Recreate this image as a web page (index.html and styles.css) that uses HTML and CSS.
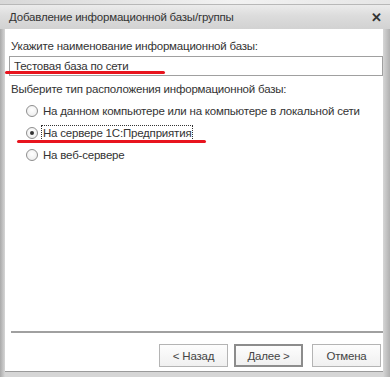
FILE: index.html
```html
<!DOCTYPE html>
<html lang="ru">
<head>
  <meta charset="UTF-8">
  <title>Добавление информационной базы/группы</title>
  <link rel="stylesheet" href="styles.css">
</head>
<body>
  <div class="behind"></div>
  <div class="window">
    <div class="titlebar">
      <span class="title">Добавление информационной базы/группы</span>
      <span class="close">&#x2715;</span>
    </div>
    <div class="content">
      <div class="label">Укажите наименование информационной базы:</div>
      <div class="field">
        <input type="text" class="name" value="Тестовая база по сети">
        <div class="mark mark-name"></div>
      </div>
      <div class="label second">Выберите тип расположения информационной базы:</div>
      <div class="options">
        <label class="option"><span class="radio"></span><span class="text">На данном компьютере или на компьютере в локальной сети</span></label>
        <label class="option checked"><span class="radio"></span><span class="text focus">На сервере 1С:Предприятия</span><div class="mark mark-server"></div></label>
        <label class="option"><span class="radio"></span><span class="text">На веб-сервере</span></label>
      </div>
      <div class="spacer"></div>
      <div class="footer">
        <button class="btn">&lt; Назад</button>
        <button class="btn default">Далее &gt;</button>
        <button class="btn cancel">Отмена</button>
      </div>
    </div>
  </div>
</body>
</html>
```

FILE: styles.css
```css
body {
  margin: 0;
  height: 377px;
  overflow: hidden;
  background-color: #c9c9c9;
  font-family: "Liberation Sans", Arial, sans-serif;
  font-size: 11.5px;
  letter-spacing: -0.2px;
  color: #333;
}
.behind {
  height: 4px;
  background: linear-gradient(to right, #d8d8d8, #f2f2f2 60%, #e6e6e6);
}
.window {
  height: 373px;
  display: flex;
  flex-direction: column;
  background: linear-gradient(to right, #a9a9a9, #d6d6d6 5px, #d6d6d6 calc(100% - 7px), #b0b0b0);
}
.titlebar {
  height: 24px;
  display: flex;
  align-items: center;
  justify-content: space-between;
  padding: 0 8px 0 9px;
  background: linear-gradient(#ececec, #dcdcdc 45%, #d2d2d2);
  border-top: 1px solid #b8b8b8;
}
.title {
  color: #333;
}
.close {
  font-size: 13px;
  font-weight: bold;
  color: #333;
}
.content {
  flex: 1;
  margin: 0 7px 6px 5px;
  background-color: #fff;
  display: flex;
  flex-direction: column;
  padding: 9px 0 0 4px;
  box-shadow: 0 1px 0 #9a9a9a;
}
.label {
  padding-left: 2px;
  height: 16px;
  line-height: 16px;
}
.label.second {
  margin-top: 5px;
}
.field {
  position: relative;
  margin-top: 2px;
}
.name {
  display: block;
  box-sizing: border-box;
  width: 374px;
  height: 20px;
  border: 1px solid #a0a0a0;
  padding: 0 4px;
  font-family: "Liberation Sans", Arial, sans-serif;
  font-size: 11.5px;
  letter-spacing: -0.2px;
  color: #333;
  outline: none;
}
.mark {
  position: absolute;
  height: 3px;
  background-color: #e8141e;
  border-radius: 2px;
}
.mark-name {
  left: -4px;
  top: 15px;
  width: 160px;
}
.options {
  display: flex;
  flex-direction: column;
  gap: 4px;
  margin-top: 5px;
  padding-left: 17px;
}
.option {
  position: relative;
  display: flex;
  align-items: center;
  height: 18px;
}
.radio {
  box-sizing: border-box;
  width: 12px;
  height: 12px;
  border-radius: 50%;
  border: 1px solid #8e8e8e;
  background: radial-gradient(circle at 50% 40%, #fff, #e9e9e9);
  margin-right: 3px;
  position: relative;
}
.checked .radio::after {
  content: "";
  position: absolute;
  left: 3px;
  top: 3px;
  width: 4px;
  height: 4px;
  border-radius: 50%;
  background-color: #333;
}
.text {
  padding: 1px 1px;
  border: 1px dotted transparent;
}
.text.focus {
  border-color: #333;
}
.mark-server {
  left: -9px;
  top: 16px;
  width: 189px;
}
.spacer {
  flex: 1;
}
.footer {
  border-top: 2px solid #a0a0a0;
  margin-left: 2px;
  display: flex;
  justify-content: flex-end;
  gap: 6px;
  padding: 11px 2px 4px 0;
}
.btn {
  width: 69px;
  height: 23px;
  background: linear-gradient(#fdfdfd, #f0f0f0);
  border: 1px solid #b4b4b4;
  font-family: "Liberation Sans", Arial, sans-serif;
  font-size: 11.5px;
  letter-spacing: -0.2px;
  color: #444;
  padding: 0;
}
.btn.default {
  border: 2px solid #8c8c8c;
}
.btn.cancel {
  margin-left: 3px;
}
```
